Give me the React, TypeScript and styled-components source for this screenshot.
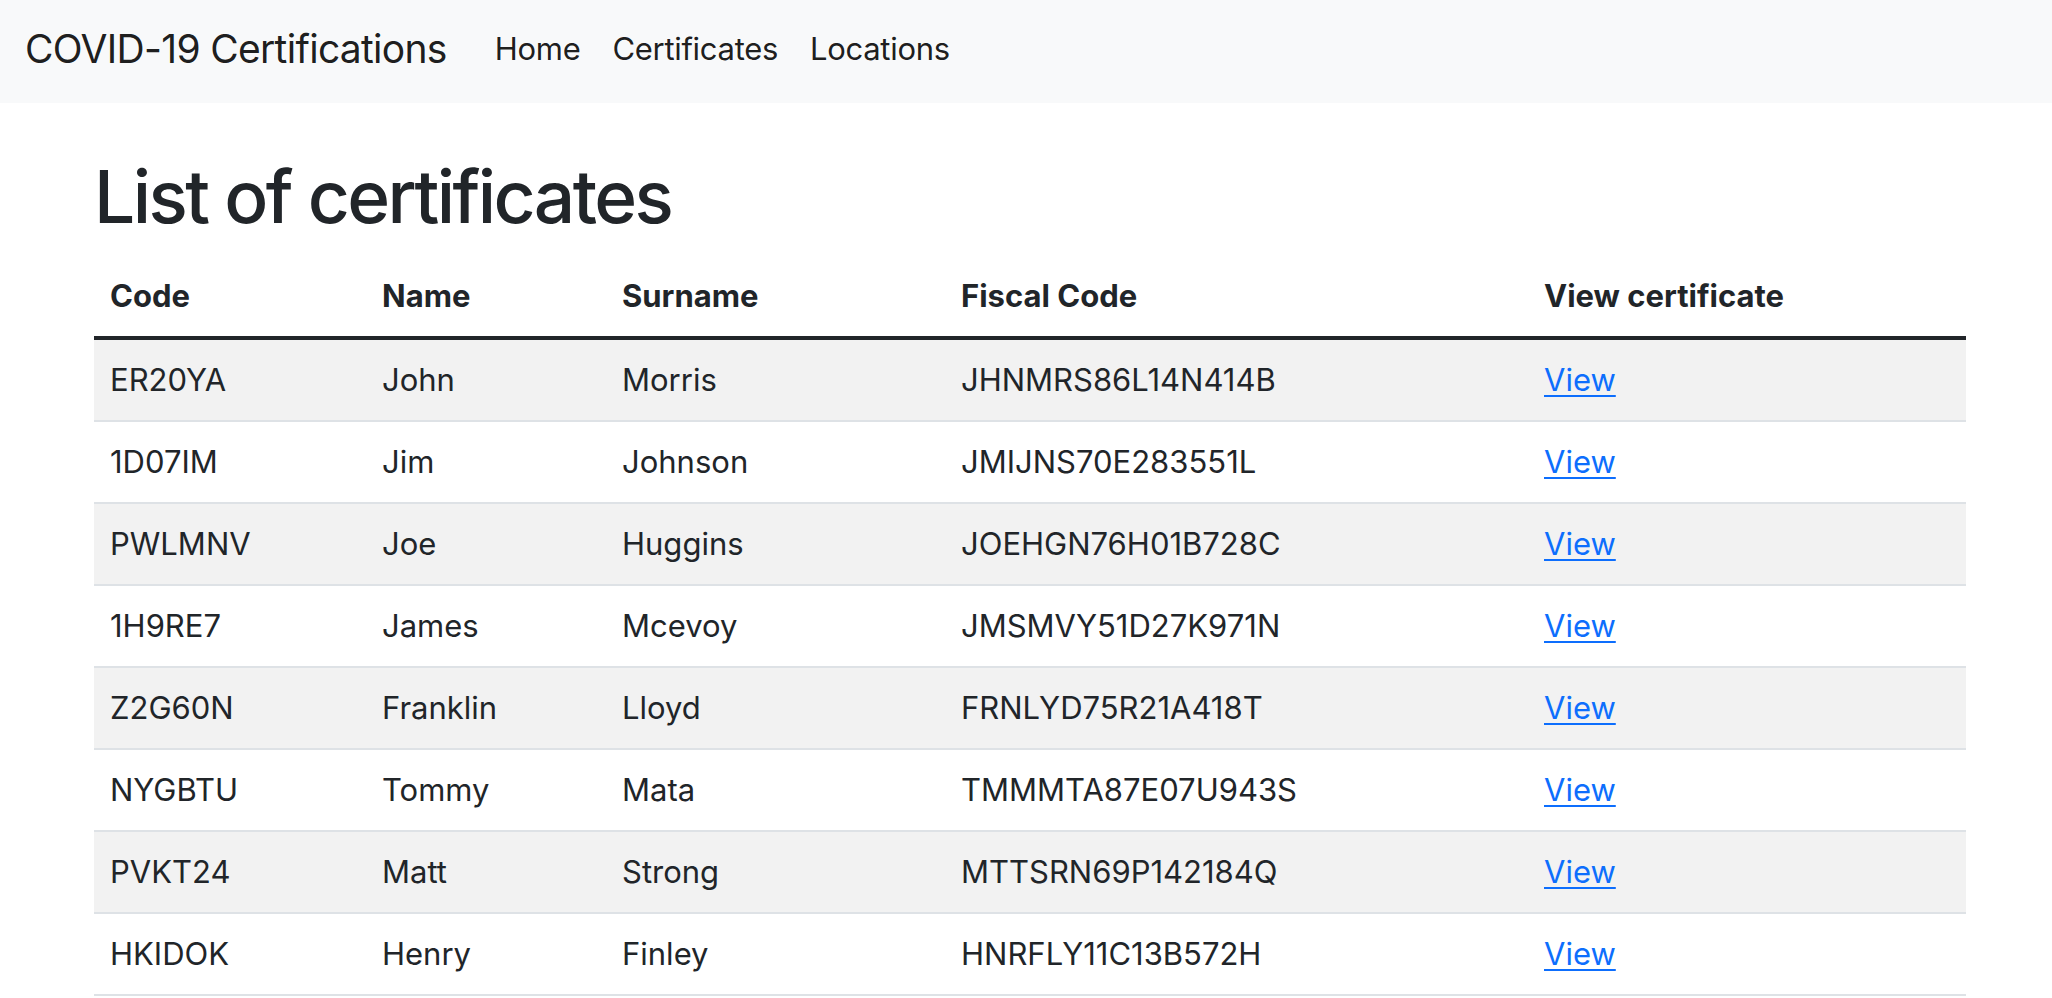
import React from "react";
import styled, { createGlobalStyle } from "styled-components";

const GlobalStyle = createGlobalStyle`
  html, body { margin: 0; padding: 0; background: #fff; }
  body {
    font-family: Inter, "Liberation Sans", Arial, sans-serif;
    color: #212529;
    -webkit-font-smoothing: antialiased;
  }
  * { box-sizing: border-box; }
`;

const NavBar = styled.nav`
  height: 103px;
  background: #f8f9fa;
  display: flex;
  align-items: center;
  gap: 48px;
  padding: 0 25px 6px;
`;

const Brand = styled.a`
  font-size: 39px;
  line-height: 1;
  letter-spacing: -0.7px;
  color: rgba(0, 0, 0, 0.9);
  text-decoration: none;
`;

const NavLinks = styled.div`
  display: flex;
  align-items: center;
  gap: 32px;
`;

const NavLink = styled.a`
  font-size: 31px;
  line-height: 1;
  letter-spacing: -0.3px;
  color: rgba(0, 0, 0, 0.9);
  text-decoration: none;
`;

const Main = styled.main`
  display: flex;
  flex-direction: column;
  gap: 14px;
  padding: 49px 86px 0 94px;
`;

const Title = styled.h1`
  margin: 0;
  font-size: 73px;
  font-weight: 500;
  line-height: 90px;
  letter-spacing: -2.6px;
  color: #212529;
`;

const Table = styled.table`
  width: 1872px;
  border-collapse: collapse;
  table-layout: fixed;
  font-size: 31px;
`;

const HeadCell = styled.th<{ $w: number }>`
  width: ${(p) => p.$w}px;
  text-align: left;
  font-weight: 700;
  padding: 16px;
  line-height: 48px;
  height: 80px;
  border-bottom: 4px solid #212529;
`;

const Row = styled.tr<{ $striped: boolean }>`
  background: ${(p) => (p.$striped ? "#f2f2f2" : "#fff")};
  border-bottom: 2px solid #dee2e6;
`;

const Cell = styled.td`
  padding: 16px;
  line-height: 48px;
  height: 80px;
  color: #212529;
`;

const ViewLink = styled.a`
  color: #0d6efd;
  text-decoration: underline;
  text-decoration-thickness: 2px;
  text-underline-offset: 4px;
`;

const columns = [
  { label: "Code", w: 272 },
  { label: "Name", w: 240 },
  { label: "Surname", w: 339 },
  { label: "Fiscal Code", w: 583 },
  { label: "View certificate", w: 438 },
];

const rows = [
  ["ER20YA", "John", "Morris", "JHNMRS86L14N414B"],
  ["1D07IM", "Jim", "Johnson", "JMIJNS70E283551L"],
  ["PWLMNV", "Joe", "Huggins", "JOEHGN76H01B728C"],
  ["1H9RE7", "James", "Mcevoy", "JMSMVY51D27K971N"],
  ["Z2G60N", "Franklin", "Lloyd", "FRNLYD75R21A418T"],
  ["NYGBTU", "Tommy", "Mata", "TMMMTA87E07U943S"],
  ["PVKT24", "Matt", "Strong", "MTTSRN69P142184Q"],
  ["HKIDOK", "Henry", "Finley", "HNRFLY11C13B572H"],
];

export default function App() {
  return (
    <>
      <GlobalStyle />
      <NavBar>
        <Brand href="#">COVID-19 Certifications</Brand>
        <NavLinks>
          <NavLink href="#">Home</NavLink>
          <NavLink href="#">Certificates</NavLink>
          <NavLink href="#">Locations</NavLink>
        </NavLinks>
      </NavBar>
      <Main>
        <Title>List of certificates</Title>
        <Table>
          <thead>
            <tr>
              {columns.map((c) => (
                <HeadCell key={c.label} $w={c.w}>
                  {c.label}
                </HeadCell>
              ))}
            </tr>
          </thead>
          <tbody>
            {rows.map((r, i) => (
              <Row key={r[0]} $striped={i % 2 === 0}>
                {r.map((v, j) => (
                  <Cell key={j}>{v}</Cell>
                ))}
                <Cell>
                  <ViewLink href="#">View</ViewLink>
                </Cell>
              </Row>
            ))}
          </tbody>
        </Table>
      </Main>
    </>
  );
}
